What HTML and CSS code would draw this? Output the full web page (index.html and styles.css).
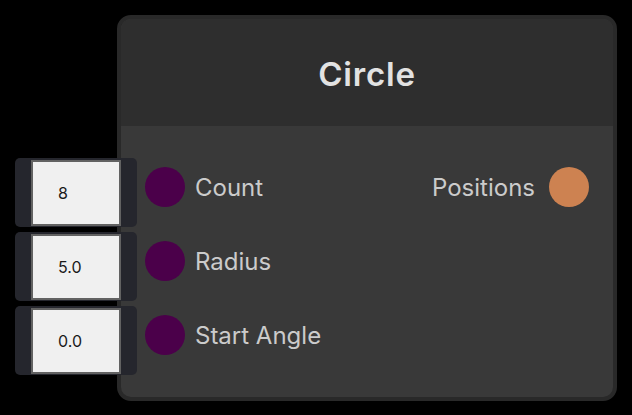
FILE: index.html
```html
<!DOCTYPE html>
<html>
<head>
<meta charset="utf-8">
<link rel="stylesheet" href="styles.css">
</head>
<body>
<div class="canvas">
  <div class="inputs">
    <div class="field"><div class="box">8</div></div>
    <div class="field"><div class="box">5.0</div></div>
    <div class="field"><div class="box">0.0</div></div>
  </div>
  <div class="node">
    <div class="header">Circle</div>
    <div class="body">
      <div class="row">
        <div class="port in"></div>
        <span class="label">Count</span>
        <span class="spacer"></span>
        <span class="label">Positions</span>
        <div class="port out"></div>
      </div>
      <div class="row">
        <div class="port in"></div>
        <span class="label">Radius</span>
      </div>
      <div class="row">
        <div class="port in"></div>
        <span class="label">Start Angle</span>
      </div>
    </div>
  </div>
</div>
</body>
</html>
```
FILE: styles.css
```css
html, body {
  margin: 0;
  padding: 0;
  background: #000;
  width: 632px;
  height: 415px;
  overflow: hidden;
  font-family: "Inter", "Noto Sans", sans-serif;
}
.canvas {
  display: flex;
  align-items: flex-start;
  padding: 15px 0 0 15px;
}
.inputs {
  position: relative;
  z-index: 1;
  display: flex;
  flex-direction: column;
  gap: 5px;
  margin-top: 143px;
  margin-right: -20px;
  width: 122px;
}
.field {
  box-sizing: border-box;
  height: 69px;
  background: #25262d;
  border-radius: 5px;
  padding: 2px 16px 1px 16px;
}
.box {
  box-sizing: border-box;
  height: 66px;
  background: #f0f0f0;
  border: 2px solid #626262;
  color: #1a1a1a;
  font-size: 16px;
  display: flex;
  align-items: center;
  padding-left: 25px;
}
.node {
  box-sizing: border-box;
  width: 500px;
  height: 386px;
  border: 4px solid #292929;
  border-radius: 14px;
  background: #393939;
  overflow: hidden;
  display: flex;
  flex-direction: column;
}
.header {
  height: 107px;
  background: #2e2e2e;
  color: #e2e2e2;
  font-size: 33px;
  font-weight: 600;
  letter-spacing: 0.8px;
  display: flex;
  align-items: center;
  justify-content: center;
  padding-top: 3px;
  box-sizing: border-box;
}
.body {
  padding: 24px 24px 0 24px;
  display: flex;
  flex-direction: column;
}
.row {
  height: 74px;
  display: flex;
  align-items: center;
  gap: 10px;
}
.spacer { flex: 1; }
.port {
  width: 40px;
  height: 40px;
  border-radius: 50%;
  flex: none;
}
.port.in { background: #4b004a; }
.port.out { background: #cd8251; margin-left: 4px; }
.label {
  color: #cbcbcb;
  font-size: 24px;
}
```
